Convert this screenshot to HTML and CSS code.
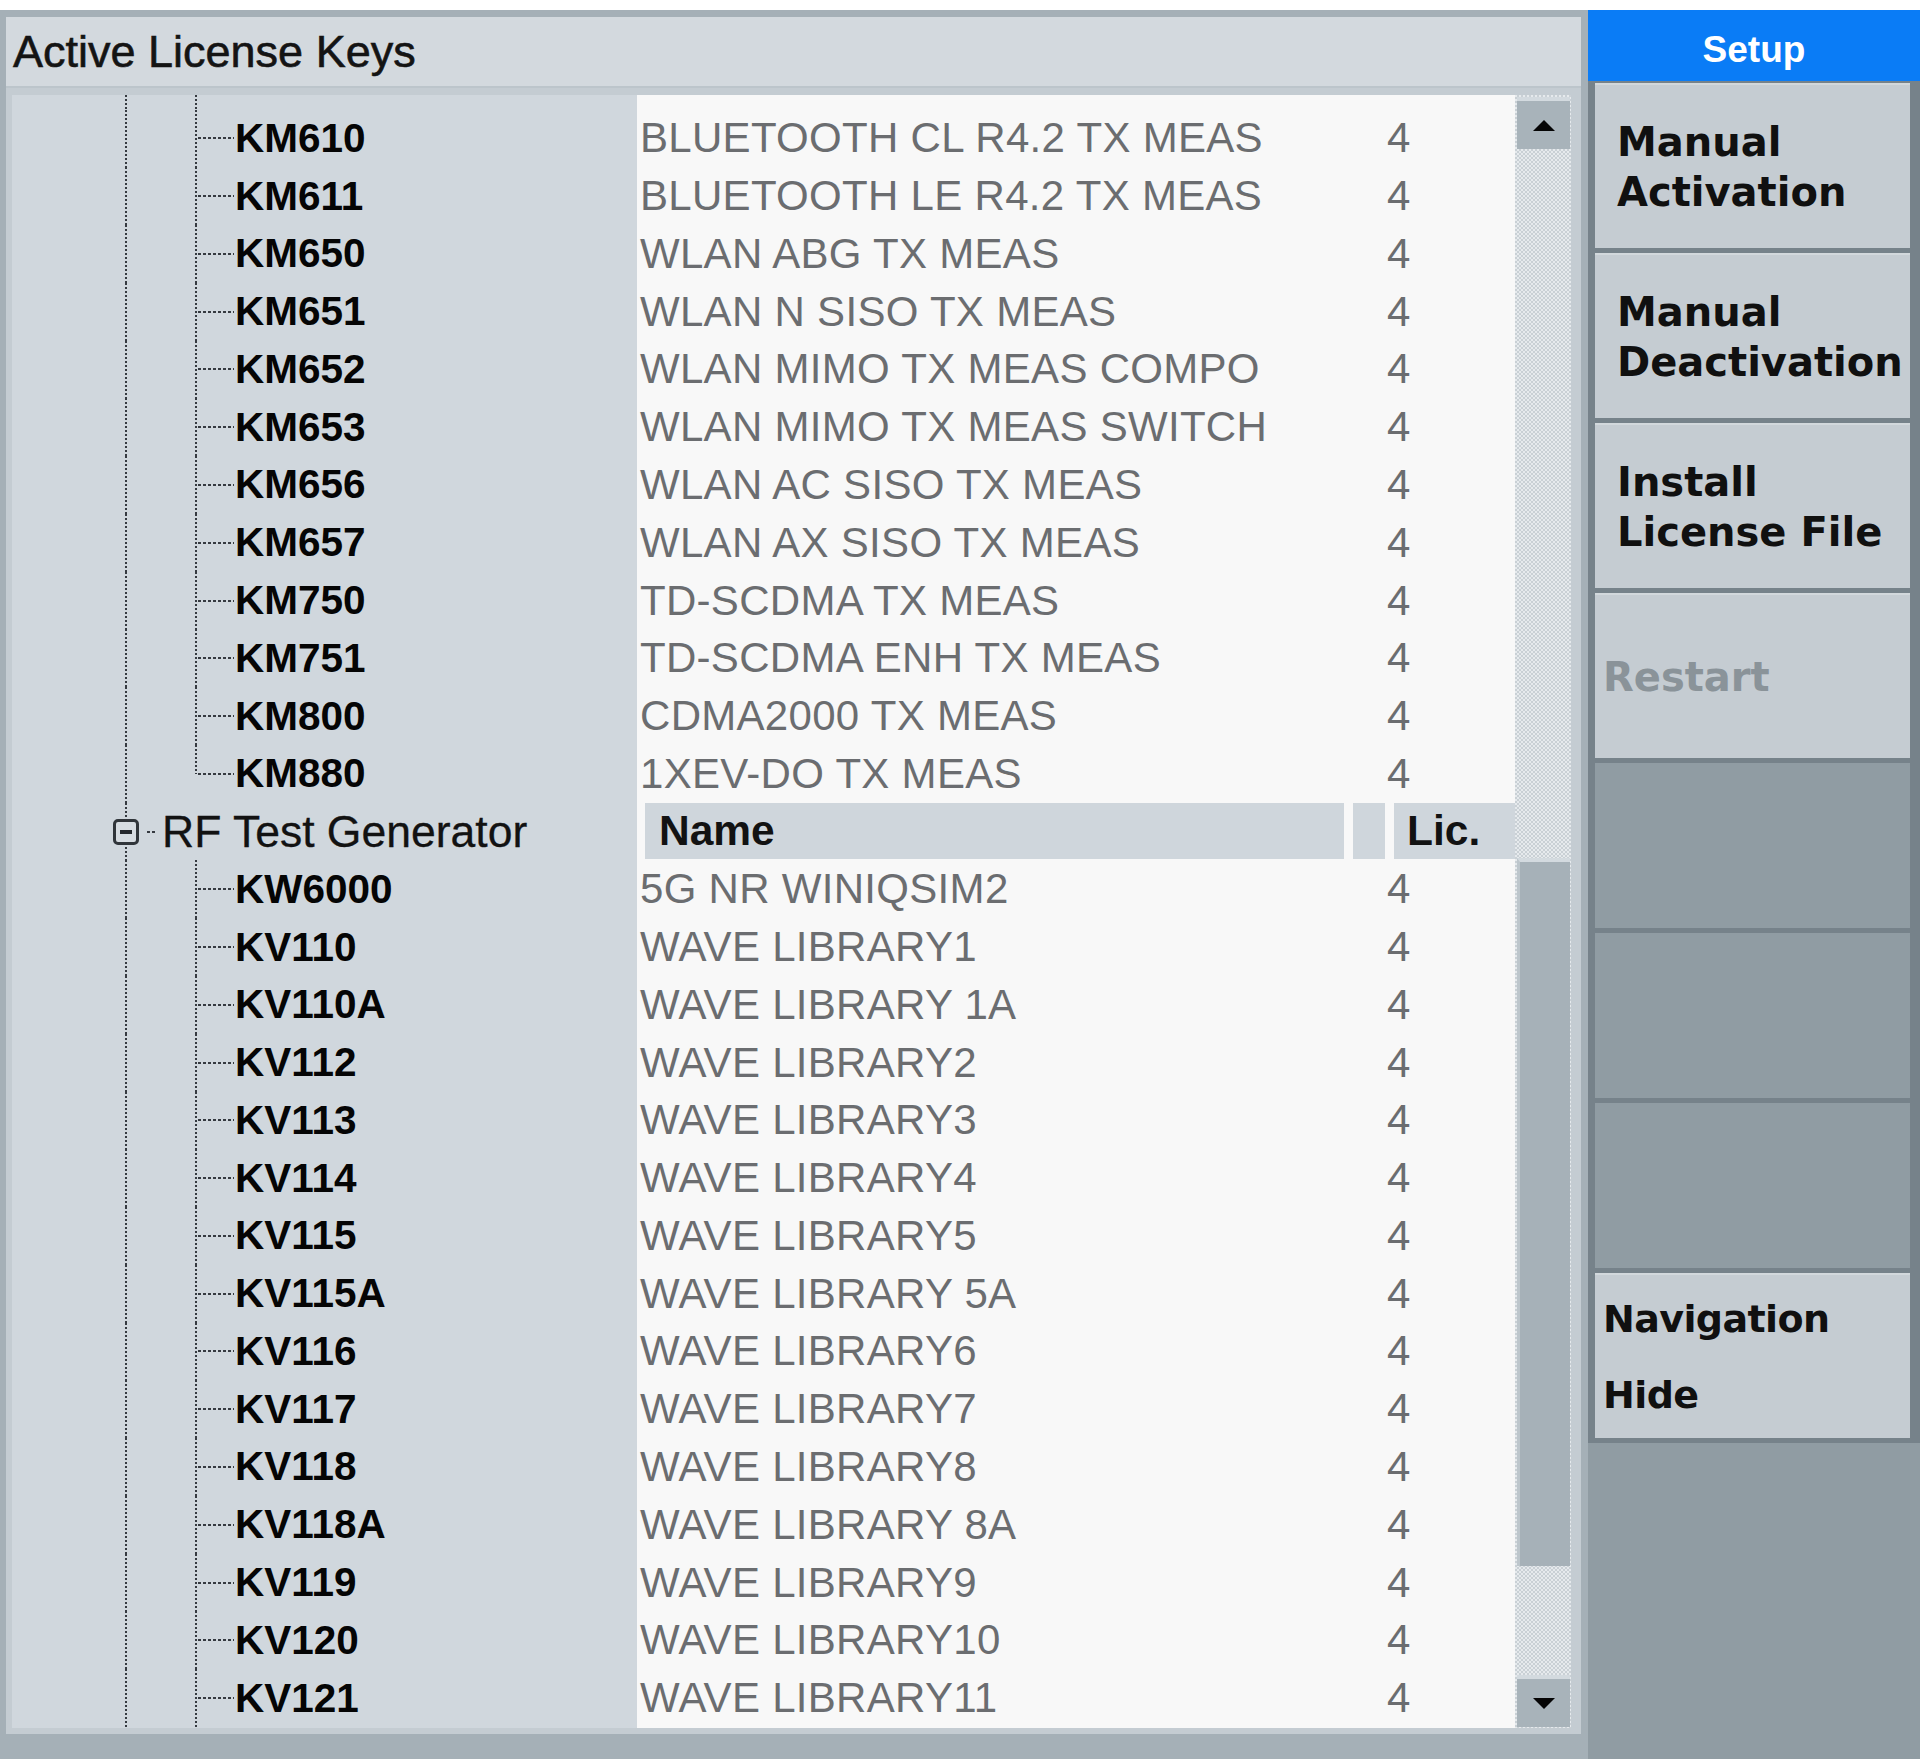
FILE: index.html
```html
<!DOCTYPE html>
<html>
<head>
<meta charset="utf-8">
<link rel="stylesheet" href="styles.css">
</head>
<body>
<div class="screen">
  <div class="main">
    <div class="frame">
      <div class="title">Active License Keys</div>
      <div class="list">
        <div class="rows">
          <div class="row sp"><div class="tc top"></div><div></div><div></div></div>
          <div class="row"><div class="tc c"><span class="key">KM610</span></div><div class="nm">BLUETOOTH CL R4.2 TX MEAS</div><div class="lc">4</div></div>
          <div class="row"><div class="tc c"><span class="key">KM611</span></div><div class="nm">BLUETOOTH LE R4.2 TX MEAS</div><div class="lc">4</div></div>
          <div class="row"><div class="tc c"><span class="key">KM650</span></div><div class="nm">WLAN ABG TX MEAS</div><div class="lc">4</div></div>
          <div class="row"><div class="tc c"><span class="key">KM651</span></div><div class="nm">WLAN N SISO TX MEAS</div><div class="lc">4</div></div>
          <div class="row"><div class="tc c"><span class="key">KM652</span></div><div class="nm">WLAN MIMO TX MEAS COMPO</div><div class="lc">4</div></div>
          <div class="row"><div class="tc c"><span class="key">KM653</span></div><div class="nm">WLAN MIMO TX MEAS SWITCH</div><div class="lc">4</div></div>
          <div class="row"><div class="tc c"><span class="key">KM656</span></div><div class="nm">WLAN AC SISO TX MEAS</div><div class="lc">4</div></div>
          <div class="row"><div class="tc c"><span class="key">KM657</span></div><div class="nm">WLAN AX SISO TX MEAS</div><div class="lc">4</div></div>
          <div class="row"><div class="tc c"><span class="key">KM750</span></div><div class="nm">TD-SCDMA TX MEAS</div><div class="lc">4</div></div>
          <div class="row"><div class="tc c"><span class="key">KM751</span></div><div class="nm">TD-SCDMA ENH TX MEAS</div><div class="lc">4</div></div>
          <div class="row"><div class="tc c"><span class="key">KM800</span></div><div class="nm">CDMA2000 TX MEAS</div><div class="lc">4</div></div>
          <div class="row"><div class="tc c last"><span class="key">KM880</span></div><div class="nm">1XEV-DO TX MEAS</div><div class="lc">4</div></div>
          <div class="row">
            <div class="tc rf"><span class="box"><span class="minus"></span></span><span class="rfdash"></span><span class="grp">RF Test Generator</span></div>
            <div class="hdr"><div class="hc hn">Name</div><div class="hc hs"></div><div class="hc hl">Lic.</div></div>
          </div>
          <div class="row"><div class="tc c"><span class="key">KW6000</span></div><div class="nm">5G NR WINIQSIM2</div><div class="lc">4</div></div>
          <div class="row"><div class="tc c"><span class="key">KV110</span></div><div class="nm">WAVE LIBRARY1</div><div class="lc">4</div></div>
          <div class="row"><div class="tc c"><span class="key">KV110A</span></div><div class="nm">WAVE LIBRARY 1A</div><div class="lc">4</div></div>
          <div class="row"><div class="tc c"><span class="key">KV112</span></div><div class="nm">WAVE LIBRARY2</div><div class="lc">4</div></div>
          <div class="row"><div class="tc c"><span class="key">KV113</span></div><div class="nm">WAVE LIBRARY3</div><div class="lc">4</div></div>
          <div class="row"><div class="tc c"><span class="key">KV114</span></div><div class="nm">WAVE LIBRARY4</div><div class="lc">4</div></div>
          <div class="row"><div class="tc c"><span class="key">KV115</span></div><div class="nm">WAVE LIBRARY5</div><div class="lc">4</div></div>
          <div class="row"><div class="tc c"><span class="key">KV115A</span></div><div class="nm">WAVE LIBRARY 5A</div><div class="lc">4</div></div>
          <div class="row"><div class="tc c"><span class="key">KV116</span></div><div class="nm">WAVE LIBRARY6</div><div class="lc">4</div></div>
          <div class="row"><div class="tc c"><span class="key">KV117</span></div><div class="nm">WAVE LIBRARY7</div><div class="lc">4</div></div>
          <div class="row"><div class="tc c"><span class="key">KV118</span></div><div class="nm">WAVE LIBRARY8</div><div class="lc">4</div></div>
          <div class="row"><div class="tc c"><span class="key">KV118A</span></div><div class="nm">WAVE LIBRARY 8A</div><div class="lc">4</div></div>
          <div class="row"><div class="tc c"><span class="key">KV119</span></div><div class="nm">WAVE LIBRARY9</div><div class="lc">4</div></div>
          <div class="row"><div class="tc c"><span class="key">KV120</span></div><div class="nm">WAVE LIBRARY10</div><div class="lc">4</div></div>
          <div class="row"><div class="tc c"><span class="key">KV121</span></div><div class="nm">WAVE LIBRARY11</div><div class="lc">4</div></div>
        </div>
        <div class="sb">
          <div class="sb-btn"><span class="arr-up"></span></div>
          <div class="sb-gap1"></div>
          <div class="sb-thumb"></div>
          <div class="sb-gap2"></div>
          <div class="sb-btn"><span class="arr-dn"></span></div>
        </div>
      </div>
    </div>
  </div>
  <div class="side">
    <div class="side-title">Setup</div>
    <div class="keys">
      <div class="sk">Manual<br>Activation</div>
      <div class="sk">Manual<br>Deactivation</div>
      <div class="sk">Install<br>License File</div>
      <div class="sk dis">Restart</div>
      <div class="sk empty"></div>
      <div class="sk empty"></div>
      <div class="sk empty"></div>
      <div class="sk nav">Navigation<br>Hide</div>
    </div>
    <div class="side-rest"></div>
  </div>
</div>
</body>
</html>
```

FILE: styles.css
```css
* { box-sizing: border-box; }
html, body { margin: 0; padding: 0; }
body {
  background: #ffffff;
  width: 1920px;
  height: 1759px;
  overflow: hidden;
  font-family: "Liberation Sans", Arial, sans-serif;
}
.screen {
  display: flex;
  margin-top: 10px;
  height: 1749px;
}

/* ---------- left panel ---------- */
.main {
  width: 1588px;
  background: #a5b0b7;
  padding: 7px 0 0 6px;
}
.frame {
  width: 1575px;
  height: 1717px;
  background: #c4ccd2;
  display: flex;
  flex-direction: column;
}
.title {
  height: 71px;
  background: #d3d9de;
  border-bottom: 2px solid #bcc5cb;
  font-size: 45px;
  line-height: 69px;
  padding-left: 7px;
  color: #141414;
  -webkit-text-stroke: 0.6px #141414;
  white-space: nowrap;
}
.list {
  margin: 7px 0 0 6px;
  width: 1559px;
  height: 1633px;
  display: flex;
}
.rows {
  width: 1503px;
  height: 100%;
  overflow: hidden;
  background: linear-gradient(to right, #d0d7dd 625px, #f8f8f8 625px);
}
.row {
  display: grid;
  grid-template-columns: 625px 750px 128px;
  height: 57.78px;
}
.row.sp { height: 14.5px; }

/* tree cell with dotted guide lines */
.tc {
  display: flex;
  align-items: center;
  padding-left: 223px;
  background-repeat: no-repeat;
  white-space: nowrap;
}
.tc.c, .tc.top {
  background-image:
    repeating-linear-gradient(to bottom, #353a40 0 2px, transparent 2px 4px),
    repeating-linear-gradient(to bottom, #353a40 0 2px, transparent 2px 4px),
    repeating-linear-gradient(to right, #353a40 0 3px, transparent 3px 5px);
  background-size: 2px 100%, 2px 100%, 36px 2px;
  background-position: 113px 0, 183px 0, 186px 50%;
}
.tc.top { background-size: 2px 100%, 2px 100%, 0 0; }
.tc.c.last { background-size: 2px 100%, 2px 50%, 36px 2px; }
.tc.rf {
  padding-left: 101px;
  background-image: repeating-linear-gradient(to bottom, #353a40 0 2px, transparent 2px 4px);
  background-size: 2px 100%;
  background-position: 113px 0;
}
.key {
  font-weight: bold;
  font-size: 40.5px;
  color: #050505;
}
.box {
  width: 26px;
  height: 26px;
  border: 3px solid #30353a;
  border-radius: 5px;
  background: #d6dce1;
  display: flex;
  align-items: center;
  justify-content: center;
}
.minus {
  width: 12px;
  height: 4px;
  background: #25292d;
}
.rfdash {
  width: 8px;
  height: 2px;
  margin: 0 7px 0 8px;
  background: repeating-linear-gradient(to right, #353a40 0 3px, transparent 3px 5px);
}
.grp {
  font-size: 44.5px;
  color: #121212;
  -webkit-text-stroke: 0.3px #121212;
}
.nm, .lc {
  display: flex;
  align-items: center;
  font-size: 42px;
  color: #6b6d70;
  white-space: nowrap;
}
.nm { padding-left: 3px; letter-spacing: 0.3px; }

/* table header */
.hdr {
  grid-column: 2 / 4;
  display: flex;
  gap: 9px;
  padding: 0 0 1px 8px;
}
.hc {
  background: #cfd6dc;
  display: flex;
  align-items: center;
  font-weight: bold;
  font-size: 42.5px;
  color: #121212;
}
.hn { width: 699px; padding-left: 14px; }
.hs { width: 32px; }
.hl { flex: 1; padding-left: 13px; }

/* scrollbar */
.sb {
  width: 56px;
  height: 100%;
  display: flex;
  flex-direction: column;
  padding: 2px 1px 1px 2px;
  background-color: #dde2e6;
  background-image: repeating-conic-gradient(#c9d0d5 0 25%, #e6eaed 0 50%);
  background-size: 4px 4px;
}
.sb-btn {
  height: 52px;
  background: #a8b3ba;
  border-top: 4px solid #d3dadf;
  display: flex;
  align-items: center;
  justify-content: center;
}
.arr-up {
  width: 0; height: 0;
  border-left: 11px solid transparent;
  border-right: 11px solid transparent;
  border-bottom: 11px solid #050505;
}
.arr-dn {
  width: 0; height: 0;
  border-left: 11px solid transparent;
  border-right: 11px solid transparent;
  border-top: 11px solid #050505;
}
.sb-gap1 { height: 709px; }
.sb-thumb {
  height: 708px;
  background: #a6b1b8;
  border-top: 4px solid #d3dadf;
  border-left: 3px solid #bdc6cc;
}
.sb-gap2 { flex: 1; }

/* ---------- right softkey bar ---------- */
.side {
  width: 332px;
  background: #909ca3;
  display: flex;
  flex-direction: column;
}
.side-title {
  height: 71px;
  background: #0a7cf6;
  color: #ffffff;
  font-weight: bold;
  font-size: 37px;
  display: flex;
  align-items: center;
  justify-content: center;
  padding-top: 8px;
}
.keys {
  display: flex;
  flex-direction: column;
  gap: 5px;
  padding: 2px 10px 5px 7px;
  background: #76828a;
}
.sk {
  height: 165px;
  background: #c5ccd2;
  border-top: 2px solid #d2d8dc;
  display: flex;
  align-items: center;
  padding-left: 22px;
  font-family: "DejaVu Sans", Verdana, sans-serif;
  font-weight: bold;
  font-size: 40px;
  line-height: 50px;
  color: #101010;
  white-space: nowrap;
  overflow: hidden;
}
.sk.dis { color: #8a9399; padding-left: 8px; }
.sk.empty { background: #909ca3; border-top: 0; }
.sk.nav { padding-left: 8px; line-height: 76px; font-size: 38px; letter-spacing: -0.6px; }
.side-rest { flex: 1; background: #909ca3; }
```
